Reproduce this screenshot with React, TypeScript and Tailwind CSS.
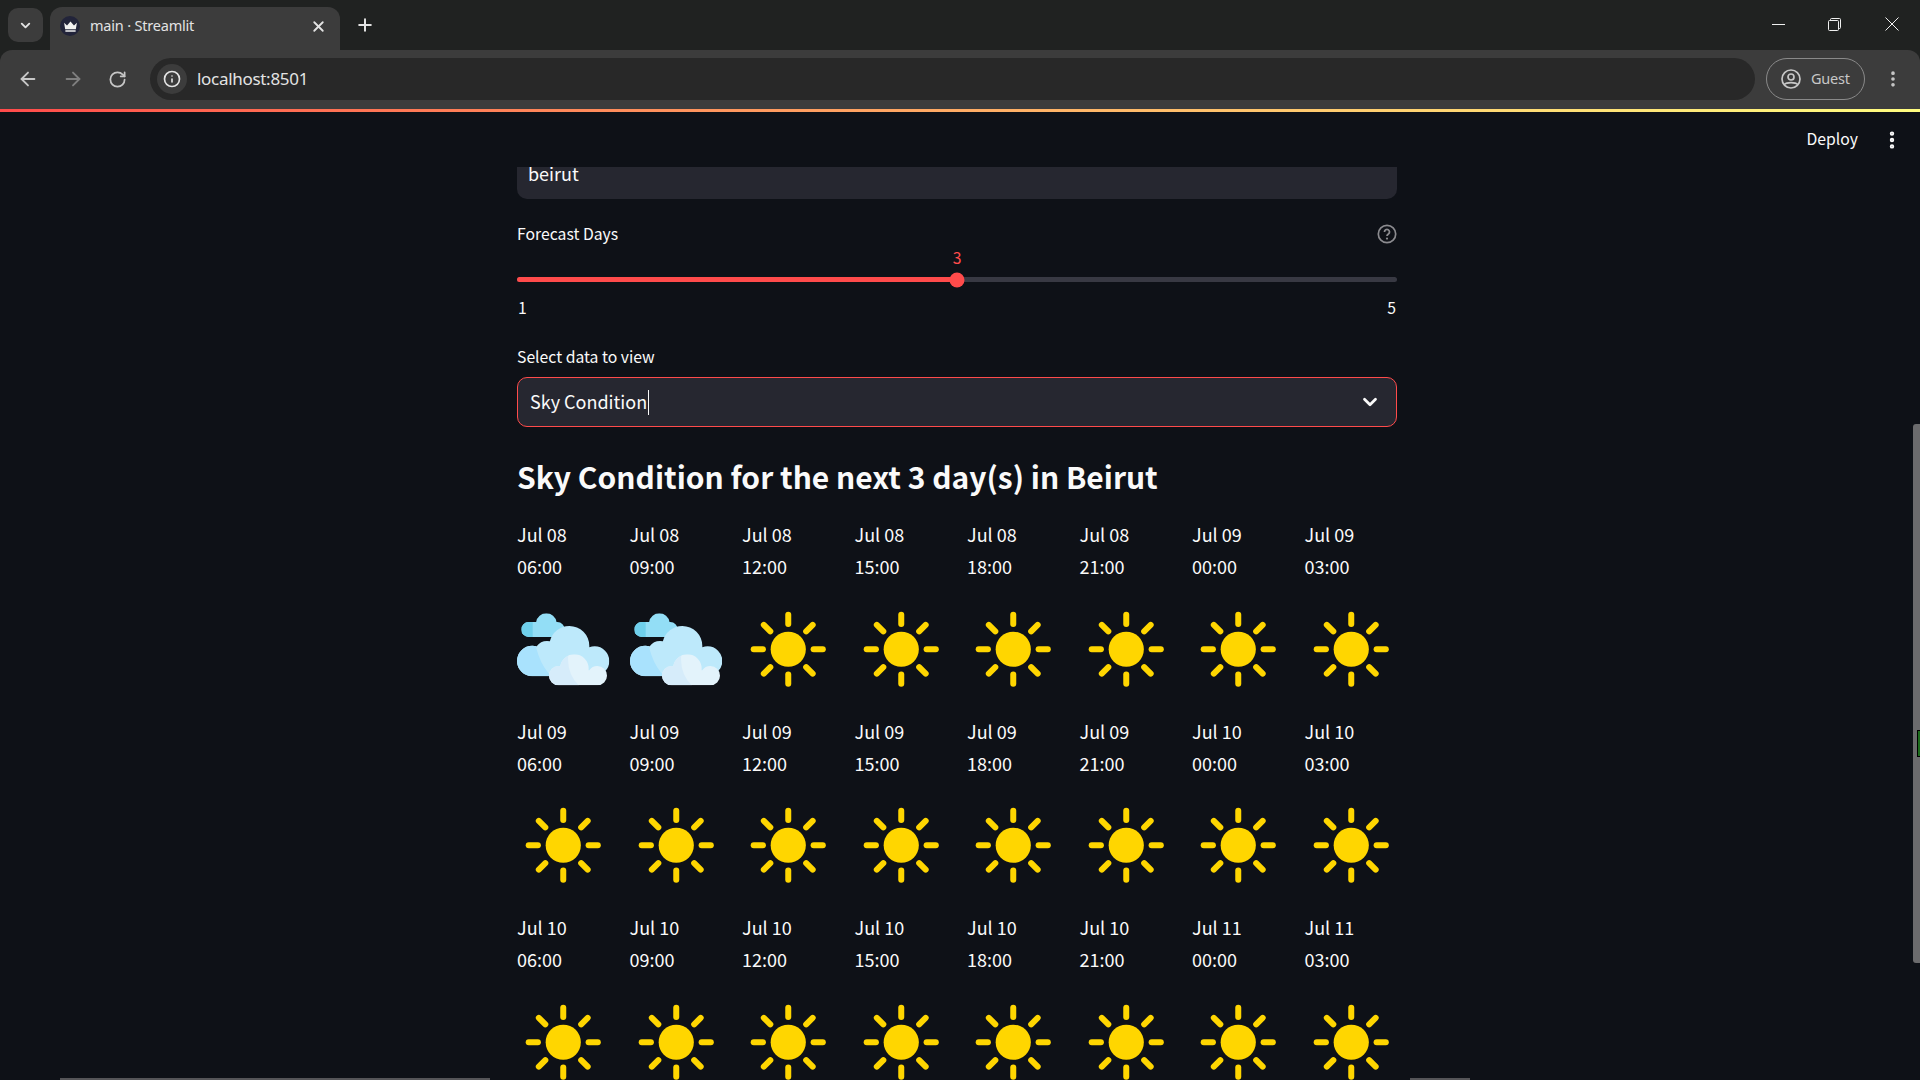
import { ArrowLeft, ArrowRight, RotateCw, X, Plus, ChevronDown, EllipsisVertical, Info } from "lucide-react";

const st = { fontFamily: '"Noto Sans CJK SC", "Noto Sans", sans-serif' };

function Sun() {
  const rays = [0, 45, 90, 135, 180, 225, 270, 315];
  return (
    <svg viewBox="0 0 92.5 92.5" className="w-full aspect-square block">
      <circle cx="46.25" cy="46.25" r="17.6" fill="#ffd600" />
      {rays.map((a) => (
        <line key={a} x1="46.25" y1="20.9" x2="46.25" y2="11.7" stroke="#ffd600" strokeWidth="6" strokeLinecap="round" transform={`rotate(${a} 46.25 46.25)`} />
      ))}
    </svg>
  );
}

function Cloud({ id }: { id: string }) {
  return (
    <svg viewBox="50 38 277.5 277.5" className="w-full aspect-square block">
      <defs>
        <clipPath id={`${id}a`}>
          <circle cx="138" cy="100" r="31" />
          <circle cx="170" cy="118" r="22" />
          <rect x="63" y="95" width="130" height="45" rx="22" />
        </clipPath>
        <clipPath id={`${id}b`}>
          <circle cx="207" cy="167" r="60" />
          <circle cx="96" cy="212" r="46" />
          <circle cx="283" cy="212" r="44" />
          <circle cx="140" cy="190" r="38" />
          <rect x="96" y="200" width="187" height="58" />
        </clipPath>
        <clipPath id={`${id}c`}>
          <circle cx="222" cy="235" r="43" />
          <circle cx="175" cy="256" r="29" />
          <circle cx="291" cy="256" r="29" />
          <rect x="175" y="240" width="116" height="45" />
        </clipPath>
      </defs>
      <g clipPath={`url(#${id}a)`}>
        <rect x="60" y="60" width="140" height="90" fill="#93def6" />
        <rect x="60" y="60" width="37" height="90" fill="#6fd0ec" />
      </g>
      <g clipPath={`url(#${id}b)`}>
        <rect x="45" y="100" width="300" height="170" fill="#bde9fb" />
        <path d="M40 100H100Q100 210 160 265H40z" fill="#a9e2fd" />
      </g>
      <g clipPath={`url(#${id}c)`}>
        <rect x="140" y="185" width="190" height="105" fill="#e3f3fb" />
        <path d="M140 185H205Q195 250 240 290H140z" fill="#d6ecfa" />
      </g>
    </svg>
  );
}

const slots = [
  ["Jul 08", "06:00", 1], ["Jul 08", "09:00", 1], ["Jul 08", "12:00", 0], ["Jul 08", "15:00", 0],
  ["Jul 08", "18:00", 0], ["Jul 08", "21:00", 0], ["Jul 09", "00:00", 0], ["Jul 09", "03:00", 0],
  ["Jul 09", "06:00", 0], ["Jul 09", "09:00", 0], ["Jul 09", "12:00", 0], ["Jul 09", "15:00", 0],
  ["Jul 09", "18:00", 0], ["Jul 09", "21:00", 0], ["Jul 10", "00:00", 0], ["Jul 10", "03:00", 0],
  ["Jul 10", "06:00", 0], ["Jul 10", "09:00", 0], ["Jul 10", "12:00", 0], ["Jul 10", "15:00", 0],
  ["Jul 10", "18:00", 0], ["Jul 10", "21:00", 0], ["Jul 11", "00:00", 0], ["Jul 11", "03:00", 0],
] as const;

export default function App() {
  return (
    <div className="relative w-screen h-screen overflow-hidden flex flex-col bg-[#0e1117]" style={{ fontFamily: '"Noto Sans", sans-serif' }}>
      {/* tab strip */}
      <div className="h-[50px] shrink-0 bg-[#202221] flex items-end pl-2 text-[#e3e3e3]">
        <div className="w-[35px] h-[34px] mb-2 rounded-[10px] bg-[#3c3c3c] flex items-center justify-center">
          <ChevronDown size={15} strokeWidth={3} />
        </div>
        <div className="ml-[7px] w-[290px] h-[43px] rounded-t-[12px] bg-[#3c3c3c] flex items-center pl-[10px] pr-[13px] pb-[5px]">
          <div className="w-5 h-5 rounded-full bg-[#22243a] flex items-center justify-center">
            <svg viewBox="0 0 16 12" className="w-[15px] h-[11px]"><path d="M1 2l3.200 3L8 .5 11.800 5 15 2l-1.200 7H2.200zM2.400 10h11.200v1.600H2.400z" fill="#f1f1f1" /></svg>
          </div>
          <span className="ml-[10px] text-[14.500px] tracking-[-0.2px] text-[#e3e3e3] whitespace-nowrap">main · Streamlit</span>
          <X size={17} strokeWidth={2.600} className="ml-auto" />
        </div>
        <Plus size={20} strokeWidth={2.400} className="ml-[15px] mb-[15px]" />
        <div className="ml-auto flex items-center h-full text-[#f0f0f0] pb-[2px]">
          <div className="w-[13px] h-px bg-[#f0f0f0] mr-[43px]" />
          <svg viewBox="0 0 13 13" className="w-[13px] h-[13px] mr-[44px]" fill="none" stroke="#f0f0f0" strokeWidth="1"><rect x="0.500" y="2.500" width="10" height="10" rx="1" /><path d="M2.500 2.500V1.500a1 1 0 0 1 1-1h8a1 1 0 0 1 1 1v8a1 1 0 0 1-1 1h-1" /></svg>
          <svg viewBox="0 0 14 14" className="w-[14px] h-[14px] mr-[21px]" stroke="#f0f0f0" strokeWidth="1"><path d="M.5.500l13 13M13.500.500l-13 13" /></svg>
        </div>
      </div>
      {/* toolbar */}
      <div className="h-[59px] shrink-0 bg-[#202221]">
        <div className="h-full rounded-t-[12px] bg-[#3c3c3c] flex items-center text-[#c7c7c7] pb-[1px]">
          <ArrowLeft size={22} strokeWidth={2} className="ml-[17px]" />
          <ArrowRight size={22} strokeWidth={2} className="ml-[23px] text-[#7f7f7f]" />
          <RotateCw size={19} strokeWidth={2.200} className="ml-[24px]" />
          <div className="ml-[23px] w-[1605px] h-[42px] rounded-full bg-[#282828] flex items-center pl-[7px]">
            <div className="w-[30px] h-[30px] rounded-full bg-[#3c3c3c] flex items-center justify-center">
              <Info size={18} strokeWidth={2.200} className="text-[#e3e3e3]" />
            </div>
            <span className="ml-[10px] text-[17px] tracking-[-0.3px] text-[#e3e3e3]">localhost:8501</span>
          </div>
          <div className="ml-[11px] w-[99px] h-[42px] rounded-full border border-[#8a8a8a] flex items-center pl-[14px]">
            <svg viewBox="0 0 20 20" className="w-5 h-5" fill="none" stroke="#c7c7c7" strokeWidth="1.700"><circle cx="10" cy="10" r="9" /><circle cx="10" cy="8" r="3" /><path d="M3.500 15.500c2-2.500 11-2.500 13 0" /></svg>
            <span className="ml-[10px] text-[14.500px] tracking-[-0.2px] text-[#c7c7c7]">Guest</span>
          </div>
          <EllipsisVertical size={20} strokeWidth={2.400} className="ml-[18px] text-[#c7c7c7]" />
        </div>
      </div>
      <div className="h-[3px] shrink-0 bg-gradient-to-r from-[#ff4b4b] to-[#fffd80]" />

      {/* streamlit header */}
      <div className="h-[55px] shrink-0 flex items-center justify-end text-[#fafafa]" style={st}>
        <span className="text-[15.750px] mb-[1px]">Deploy</span>
        <EllipsisVertical size={22} strokeWidth={2.800} className="ml-[23px] mr-[17px]" />
      </div>

      {/* content */}
      <div className="flex-1 min-h-0 overflow-hidden" style={st}>
        <div className="w-[880px] ml-[517px] text-[#fafafa]">
          <div className="h-[32px] rounded-b-[10px] bg-[#262730] pl-[11px] text-[18px] leading-[13px]">beirut</div>

          <div className="mt-[21px] h-[28px] flex items-center justify-between">
            <span className="text-[15.750px] leading-[28px]">Forecast Days</span>
            <svg viewBox="0 0 20 20" className="w-5 h-5" fill="none" stroke="#8b8b8f" strokeWidth="1.700"><circle cx="10" cy="10" r="8.700" /><path d="M7.500 8a2.500 2.500 0 1 1 3.900 2c-.9.600-1.400 1-1.400 2" strokeWidth="1.800" /><circle cx="10" cy="14.600" r="1.100" fill="#8b8b8f" stroke="none" /></svg>
          </div>

          <div className="h-[20px] w-full flex justify-center text-[15.750px] leading-[20px] text-[#ff4b4b]">3</div>
          <div className="relative mt-[9px] h-[5px] rounded-full bg-[#383943]">
            <div className="h-full w-1/2 rounded-l-full bg-[#ff4b4b]" />
            <div className="absolute left-1/2 top-1/2 -translate-x-1/2 -translate-y-1/2 w-[15px] h-[15px] rounded-full bg-[#ff4b4b]" />
          </div>
          <div className="mt-[12px] h-[28px] flex justify-between text-[15.750px] leading-[28px] px-[1px]">
            <span>1</span>
            <span>5</span>
          </div>

          <div className="mt-[21px] h-[28px] text-[15.750px] leading-[28px]">Select data to view</div>
          <div className="mt-[6px] h-[50px] rounded-[10px] border-[1.500px] border-[#ff4b4b] bg-[#262730] flex items-center pl-[12px] pr-[15px]">
            <span className="text-[18px] leading-[26px] mb-[2px]">Sky Condition</span>
            <span className="w-px h-[25px] bg-[#fafafa] ml-px" />
            <ChevronDown size={22} strokeWidth={3} className="ml-auto" />
          </div>

          <h2 className="mt-[28px] h-[42px] text-[30px] leading-[42px] font-semibold whitespace-nowrap">Sky Condition for the next 3 day(s) in Beirut</h2>

          <div className="mt-[21px] grid grid-cols-8 gap-x-5 gap-y-[19.250px]">
            {slots.map(([d, t, c], i) => (
              <div key={i} className="flex flex-col gap-[20.750px]">
                <div className="text-[18px] leading-[32px]">
                  <div>{d}</div>
                  <div>{t}</div>
                </div>
                {c ? <Cloud id={`c${i}`} /> : <Sun />}
              </div>
            ))}
          </div>
        </div>
      </div>

      {/* browser scrollbars */}
      <div className="absolute right-0 top-[424px] w-[7px] h-[539px] rounded-l-[3px] bg-[#6b6b6d]" />
      <div className="absolute right-0 top-[731px] w-[2px] h-[25px] bg-[#1d6b1d] outline outline-1 outline-black" />
      <div className="absolute left-[60px] bottom-0 w-[430px] h-[2px] bg-[#555558]" />
      <div className="absolute left-[1410px] bottom-0 w-[60px] h-[2px] bg-[#555558]" />
    </div>
  );
}
